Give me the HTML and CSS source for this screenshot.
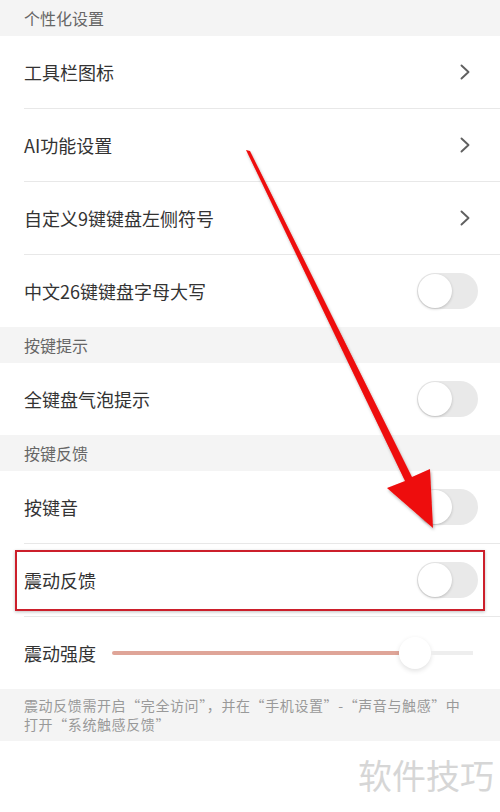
FILE: index.html
```html
<!DOCTYPE html>
<html lang="zh-CN">

<head>
    <meta charset="UTF-8">
    <meta name="viewport" content="width=device-width, initial-scale=1.0">
    <title>键盘设置</title>
    <link rel="stylesheet" href="styles.css">
</head>

<body>
    <div class="page">
        <div class="section-title">个性化设置</div>
        <div class="group">
            <div class="row">
                <span class="label">工具栏图标</span>
                <svg class="chevron" width="10" height="16" viewBox="0 0 10 16"><path d="M1.5 1.5 L8.5 8 L1.5 14.5" /></svg>
            </div>
            <div class="row">
                <span class="label">AI功能设置</span>
                <svg class="chevron" width="10" height="16" viewBox="0 0 10 16"><path d="M1.5 1.5 L8.5 8 L1.5 14.5" /></svg>
            </div>
            <div class="row">
                <span class="label">自定义9键键盘左侧符号</span>
                <svg class="chevron" width="10" height="16" viewBox="0 0 10 16"><path d="M1.5 1.5 L8.5 8 L1.5 14.5" /></svg>
            </div>
            <div class="row">
                <span class="label">中文26键键盘字母大写</span>
                <span class="switch"><span class="knob"></span></span>
            </div>
        </div>

        <div class="section-title">按键提示</div>
        <div class="group">
            <div class="row">
                <span class="label">全键盘气泡提示</span>
                <span class="switch"><span class="knob"></span></span>
            </div>
        </div>

        <div class="section-title">按键反馈</div>
        <div class="group">
            <div class="row">
                <span class="label">按键音</span>
                <span class="switch"><span class="knob"></span></span>
            </div>
            <div class="row">
                <span class="label">震动反馈</span>
                <span class="switch"><span class="knob"></span></span>
            </div>
            <div class="row slider-row">
                <span class="label">震动强度</span>
                <div class="slider">
                    <div class="slider-fill"></div>
                    <div class="slider-knob"></div>
                    <div class="slider-rest"></div>
                </div>
            </div>
        </div>

        <div class="note">震动反馈需开启“完全访问”，并在“手机设置”-“声音与触感”中<br>打开“系统触感反馈”</div>

        <div class="watermark">软件技巧</div>

        <!-- 标注 -->
        <div class="highlight-box"></div>
        <svg class="arrow" width="500" height="812" viewBox="0 0 500 812">
            <defs>
                <filter id="shadow" x="-20%" y="-20%" width="140%" height="140%">
                    <feDropShadow dx="1" dy="2" stdDeviation="1.5" flood-color="#000" flood-opacity="0.3" />
                </filter>
            </defs>
            <polygon points="246,150 250,151 412,477 430,469 433,528 387,488 405,481" fill="#ee0a0a" filter="url(#shadow)" />
        </svg>
    </div>
</body>

</html>
```

FILE: styles.css
```css
body {
    margin: 0;
    padding: 0;
    background-color: #fff;
    font-family: "Noto Sans CJK SC", "Noto Sans", sans-serif;
}

.page {
    position: relative;
    width: 500px;
    height: 812px;
    overflow: hidden;
}

.section-title {
    height: 36px;
    display: flex;
    align-items: center;
    padding-left: 24px;
    background-color: #f4f4f4;
    color: #666;
    font-size: 16px;
}

.group {
    background-color: #fff;
}

.row {
    height: 72px;
    margin-left: 24px;
    padding-right: 22px;
    display: flex;
    align-items: center;
    justify-content: space-between;
    border-bottom: 1px solid #e8e8e8;
}

.row:last-child {
    border-bottom: none;
}

.label {
    font-size: 18px;
    color: #333;
}

.chevron {
    margin-right: 8px;
}

.chevron path {
    fill: none;
    stroke: #606060;
    stroke-width: 1.9;
    stroke-linecap: round;
    stroke-linejoin: round;
}

/* 开关 */
.switch {
    width: 61px;
    height: 36px;
    border-radius: 18px;
    background-color: #e9e9e9;
    display: flex;
    align-items: center;
    padding: 0 1px;
    box-sizing: border-box;
}

.knob {
    width: 34px;
    height: 34px;
    border-radius: 50%;
    background-color: #fff;
    box-shadow: 0 1px 3px rgba(0, 0, 0, 0.2);
}

/* 滑块 */
.slider-row {
    padding-right: 27px;
    justify-content: flex-start;
}

.slider {
    flex: 1;
    margin-left: 16px;
    display: flex;
    align-items: center;
}

.slider-fill {
    width: 287px;
    height: 4px;
    border-radius: 2px 0 0 2px;
    background-color: #dfa598;
}

.slider-knob {
    width: 32px;
    height: 32px;
    border-radius: 50%;
    background-color: #fff;
    box-shadow: 0 2px 5px rgba(0, 0, 0, 0.12);
    flex-shrink: 0;
}

.slider-rest {
    flex: 1;
    height: 4px;
    background-color: #eee;
}

.note {
    background-color: #f4f4f4;
    padding: 7px 16px 7px 24px;
    color: #999;
    font-size: 14px;
    line-height: 19px;
    height: 38px;
    letter-spacing: 0.6px;
    white-space: nowrap;
}

.watermark {
    text-align: right;
    padding: 12px 6px 0 0;
    font-size: 34px;
    color: #d6d6d6;
    line-height: 44px;
}

.highlight-box {
    position: absolute;
    left: 15px;
    top: 550px;
    width: 466px;
    height: 57px;
    border: 2px solid #cc1f2b;
    box-shadow: 0 1px 3px rgba(0, 0, 0, 0.25);
}

.arrow {
    position: absolute;
    left: 0;
    top: 0;
    pointer-events: none;
}
```
